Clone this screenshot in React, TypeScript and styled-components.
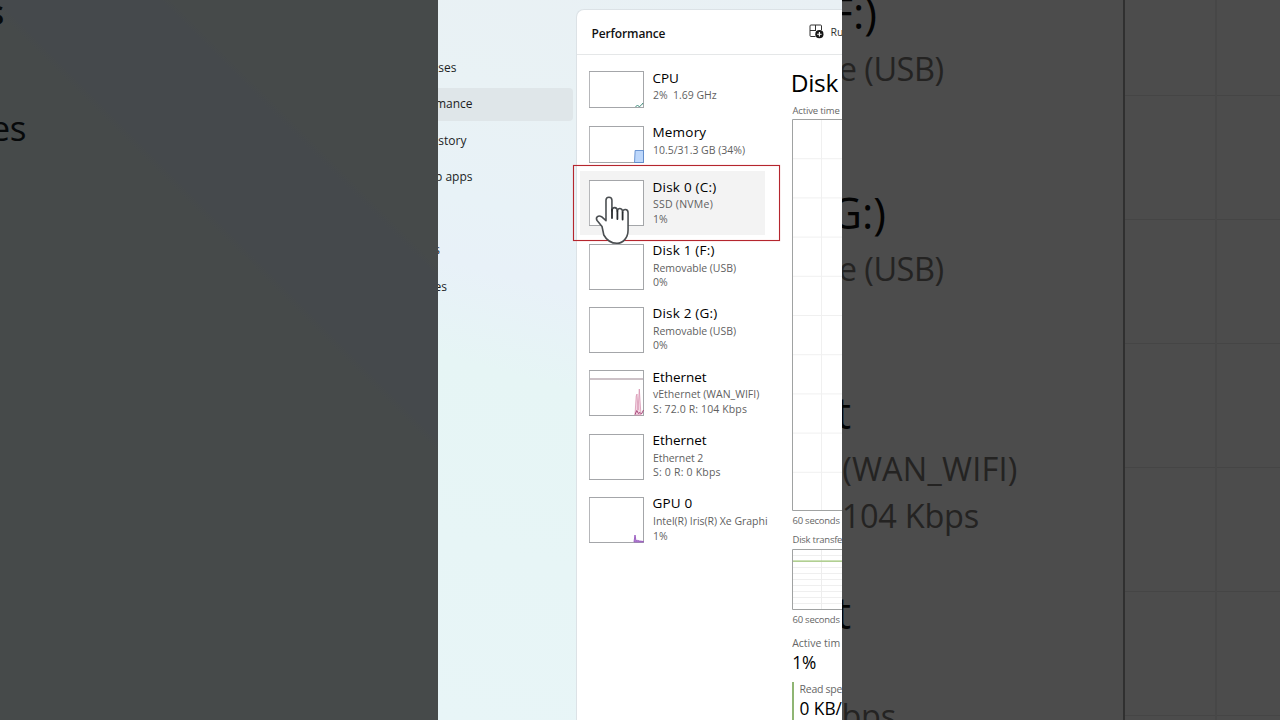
import { ReactNode } from "react";
import styled, { createGlobalStyle } from "styled-components";

const GlobalStyle = createGlobalStyle`
  * {
    box-sizing: border-box;
  }
  body {
    margin: 0;
    overflow: hidden;
    font-family: "Open Sans", "Noto Sans", sans-serif;
    color: #111;
  }
`;

const Screen = styled.div`
  display: grid;
  grid-template-columns: 438px 404px 438px;
  width: 1280px;
  height: 720px;
  overflow: hidden;
`;

/* Text whose beginning runs out of the visible area */
const Clipped = styled.div<{ $width: number }>`
  display: flex;
  justify-content: flex-end;
  width: ${(p) => p.$width}px;
  overflow: hidden;
  white-space: pre;
`;

const DimLeft = styled.div`
  display: flex;
  flex-direction: column;
  overflow: hidden;
  background: linear-gradient(
    45deg,
    #464a4a 0%,
    #464a4a 61%,
    #45494c 62%,
    #45494c 76%,
    #464a4a 77%
  );
  color: #07090a;
  font-size: 35px;
  line-height: 44px;
`;

const DimWord = styled(Clipped)<{ $gap: number; $bold?: boolean }>`
  flex: none;
  margin-top: ${(p) => p.$gap}px;
  font-weight: ${(p) => (p.$bold ? 600 : 400)};
  letter-spacing: -0.4px;
`;

const DimRight = styled.div`
  display: flex;
  justify-content: space-between;
  overflow: hidden;
  background: #4c4c4c;
`;

const DimList = styled.div`
  margin-top: -14px;
`;

const DimItem = styled.div`
  height: 200px;
`;

const DimTitle = styled(Clipped)`
  margin-bottom: 6px;
  color: #030303;
  font-size: 43px;
  line-height: 54px;
`;

const DimSub = styled(Clipped)<{ $track?: number }>`
  height: 46.5px;
  color: #242322;
  font-size: 32.5px;
  line-height: 46px;
  letter-spacing: ${(p) => p.$track ?? 0}px;
`;

const DimChart = styled.div`
  width: 157px;
  border-left: 2px solid #303030;
`;

const Stage = styled.div`
  display: flex;
  overflow: hidden;
  background: linear-gradient(
    195deg,
    #e9f0f4 0%,
    #e9f2f5 22%,
    #e8f2f7 36%,
    #e8f1f8 44%,
    #e6f5f5 56%,
    #e8f5f7 100%
  );
`;

const Nav = styled.nav`
  display: flex;
  flex-direction: column;
  flex: none;
  width: 138px;
  padding-top: 51px;
`;

const NavItem = styled.div<{ $active?: boolean }>`
  display: flex;
  align-items: center;
  flex: none;
  width: 135px;
  height: 33px;
  margin-bottom: 3.5px;
  border-radius: 0 4px 4px 0;
  background: ${(p) => (p.$active ? "#dfe6e9" : "transparent")};
  color: #1c1e1f;
  font-size: 12px;
  line-height: 18px;
`;

const Panel = styled.main`
  display: flex;
  flex-direction: column;
  flex: none;
  width: 266px;
  margin-top: 9px;
  border: solid #dce2e6;
  border-width: 1px 0 0 1px;
  border-radius: 8px 0 0 0;
  background: #fff;
`;

const Header = styled.header`
  display: flex;
  align-items: center;
  justify-content: space-between;
  flex: none;
  height: 45px;
  padding-left: 14.5px;
  border-bottom: 1px solid #e5e7e8;
`;

const Heading = styled.h1`
  margin: 3px 0 0;
  font-size: 12px;
  font-weight: 600;
  line-height: 18px;
  letter-spacing: -0.12px;
`;

const RunTask = styled.div`
  display: flex;
  align-items: center;
  gap: 6.5px;
  width: 33px;
  overflow: hidden;
  white-space: nowrap;
  color: #333;
  font-size: 10.5px;

  svg {
    flex: none;
    margin-bottom: 1px;
  }
`;

const Body = styled.div`
  display: flex;
  flex: 1;
  overflow: hidden;
`;

const List = styled.div`
  flex: none;
  width: 214.5px;
  padding: 7px 0 0 3px;
`;

const Item = styled.div<{ $short?: boolean; $selected?: boolean }>`
  display: flex;
  gap: 8px;
  width: 185px;
  height: ${(p) => (p.$short ? 54.6 : 63.35)}px;
  padding: 0 0 0 8.5px;
  background: ${(p) => (p.$selected ? "#f3f3f3" : "transparent")};
`;

const Thumb = styled.svg`
  display: block;
  flex: none;
  margin-top: 9px;
`;

const ItemText = styled.div`
  padding-top: 7.5px;
  white-space: pre;
`;

const ItemTitle = styled.div<{ $track?: number }>`
  margin-bottom: 1.5px;
  color: #000;
  font-size: 13.5px;
  line-height: 17px;
  letter-spacing: ${(p) => p.$track ?? 0}px;
`;

const ItemSub = styled.div<{ $track?: number }>`
  padding-left: 0.5px;
  color: #5f5f5f;
  font-size: 10.5px;
  line-height: 14.6px;
  letter-spacing: ${(p) => p.$track ?? 0}px;
`;

const Detail = styled.section`
  display: flex;
  flex-direction: column;
  flex: 1;
  padding-top: 12.8px;
  overflow: hidden;
  white-space: nowrap;

  svg {
    display: block;
    flex: none;
  }
`;

const DetailTitle = styled.h2`
  margin: 0 0 7px -0.7px;
  color: #000;
  font-size: 24.5px;
  font-weight: 400;
  line-height: 30px;
  letter-spacing: -0.35px;
`;

const Caption = styled.div<{ $top?: number; $bottom?: number; $track: number }>`
  flex: none;
  margin: ${(p) => p.$top ?? 0}px 0 ${(p) => p.$bottom ?? 0}px 1px;
  color: #666;
  font-size: 9.5px;
  line-height: 12px;
  letter-spacing: ${(p) => p.$track}px;
`;

const StatLabel = styled.div<{ $track?: number }>`
  color: #666;
  font-size: 10.5px;
  line-height: 14px;
  letter-spacing: ${(p) => p.$track ?? 0}px;
`;

const StatValue = styled.div`
  margin-top: 3px;
  color: #000;
  font-size: 17.3px;
  line-height: 20px;
`;

const Stat = styled.div`
  margin-top: 10px;
  padding-left: 0.7px;
`;

const SpeedStat = styled.div`
  flex: none;
  margin-top: 9.5px;
  height: 60px;
  padding-left: 6px;
  border-left: 2px solid #8fb573;
`;

const Highlight = styled.div`
  position: absolute;
  left: 573px;
  top: 165px;
  width: 207px;
  height: 76px;
  border: 1.5px solid #b5262e;
  box-shadow:
    0 0 1px rgba(220, 60, 70, 0.5),
    inset 0 0 1px rgba(220, 60, 70, 0.5);
`;

const Cursor = styled.svg`
  position: absolute;
  left: 594px;
  top: 195px;
`;

interface Resource {
  title: string;
  titleTrack?: number;
  lines: { text: string; track?: number }[];
  short?: boolean;
  selected?: boolean;
  graph?: ReactNode;
}

const resources: Resource[] = [
  {
    title: "CPU",
    lines: [{ text: "2%  1.69 GHz", track: -0.02 }],
    short: true,
    graph: (
      <path d="M46.5 35.5l2-1 2 1 2-1.5 1.5-2" stroke="#3f8c7c" fill="none" />
    ),
  },
  {
    title: "Memory",
    titleTrack: 0.2,
    lines: [{ text: "10.5/31.3 GB (34%)" }],
    short: true,
    graph: (
      <path
        d="M45.500 36.500l.6-12h8.400v12z"
        fill="#bdd7fb"
        stroke="#4f80c8"
        strokeWidth="0.8"
      />
    ),
  },
  {
    title: "Disk 0 (C:)",
    titleTrack: 0.23,
    lines: [{ text: "SSD (NVMe)", track: 0.25 }, { text: "1%" }],
    selected: true,
  },
  {
    title: "Disk 1 (F:)",
    titleTrack: 0.2,
    lines: [{ text: "Removable (USB)", track: -0.04 }, { text: "0%" }],
  },
  {
    title: "Disk 2 (G:)",
    titleTrack: 0.2,
    lines: [{ text: "Removable (USB)", track: -0.04 }, { text: "0%" }],
  },
  {
    title: "Ethernet",
    titleTrack: -0.03,
    lines: [
      { text: "vEthernet (WAN_WIFI)" },
      { text: "S: 72.0 R: 104 Kbps", track: 0.12 },
    ],
    graph: (
      <>
        <path d="M1 9h53" stroke="#9b8590" />
        <path
          d="M46 45l1.200-19 .8-2 1 16 1.300-21 1.200 19 .5 7z"
          fill="#f3d5e3"
          stroke="#d48bab"
          strokeWidth="0.7"
        />
        <path
          d="M46 44.5l1.8-4 1.6 3 1.6-1 1.5 1.5 2-4"
          fill="none"
          stroke="#a8487a"
        />
      </>
    ),
  },
  {
    title: "Ethernet",
    titleTrack: -0.03,
    lines: [
      { text: "Ethernet 2", track: -0.08 },
      { text: "S: 0 R: 0 Kbps", track: 0.2 },
    ],
  },
  {
    title: "GPU 0",
    titleTrack: 0.2,
    lines: [
      { text: "Intel(R) Iris(R) Xe Graphi", track: -0.03 },
      { text: "1%" },
    ],
    graph: (
      <path
        d="M45 45l1-7 1 5.800 1.500-.4 2 .6 4 .5v.5z"
        fill="#b98ad8"
        stroke="#9657bd"
        strokeWidth="0.9"
      />
    ),
  },
];

const navItems = ["ses", "mance", "story", "p apps", "", "s", "es"];
const navWidths = [18.5, 34.5, 28.5, 34.5, 0, 2, 9];

const dimItems = [
  { title: "F:)", width: 35, sub: "e (USB)", subWidth: 101.5, track: -0.5 },
  { title: "G:)", width: 44, sub: "e (USB)", subWidth: 101.5, track: -0.5 },
  {
    title: "t",
    width: 9,
    sub: "(WAN_WIFI)",
    subWidth: 175.5,
    track: 0.2,
    extra: "104 Kbps",
    extraWidth: 137,
  },
  { title: "t", width: 9, sub: "", subWidth: 0, extra: "bps", extraWidth: 54 },
];

const ResourceItem = ({
  title,
  titleTrack,
  lines,
  short,
  selected,
  graph,
}: Resource): JSX.Element => {
  const height = short ? 37 : 46;
  return (
    <Item $short={short} $selected={selected}>
      <Thumb width={56} height={height}>
        <rect
          x="0.3"
          y="0.5"
          width="54.2"
          height={height - 1}
          fill="#fff"
          stroke="#a4a6a9"
        />
        {graph}
      </Thumb>
      <ItemText>
        <ItemTitle $track={titleTrack}>{title}</ItemTitle>
        {lines.map((line) => (
          <ItemSub key={line.text} $track={line.track}>
            {line.text}
          </ItemSub>
        ))}
      </ItemText>
    </Item>
  );
};

const RunTaskIcon = () => (
  <svg width="15" height="15" viewBox="0 0 15 15" fill="none">
    <path
      d="M6.5 12.5H2a1 1 0 0 1-1-1V2a1 1 0 0 1 1-1h9.5a1 1 0 0 1 1 1v4M6.5 1v5.5M1 6.5h6"
      stroke="#333"
    />
    <circle cx="10.4" cy="10.2" r="4.1" fill="#161616" />
    <path d="M10.4 8v4.4M8.2 10.2h4.4" stroke="#fff" strokeWidth="1.1" />
  </svg>
);

const ActiveTimeChart = () => (
  <svg width="60" height="393">
    {[...Array(9)].map((_, i) => (
      <path key={i} d={`M1 ${39.7 + i * 39.2}h59`} stroke="#f0f0f0" />
    ))}
    <path d="M29.5 1v391" stroke="#f0f0f0" />
    <path d="M60 .5H.5v391H60" fill="none" stroke="#a0a2a2" />
  </svg>
);

const TransferChart = () => (
  <svg width="60" height="61">
    {[...Array(9)].map((_, i) => (
      <path key={i} d={`M1 ${6.5 + i * 6}h59`} stroke="#efefef" />
    ))}
    <path d="M29.5 1v59" stroke="#ededed" />
    <path d="M1 12.2h59" stroke="#9cc473" strokeWidth="1.3" />
    <path d="M60 .5H.5v60H60" fill="none" stroke="#a0a2a2" />
  </svg>
);

const HandCursor = () => (
  <Cursor width="40" height="50" viewBox="0 0 40 50">
    <path
      d="M11.5 24V5.200a3 3 0 0 1 6 0V16c0-4.500 5.500-4.500 5.500.3 0-4 5.300-3.800 5.300.9 0-3.600 5.500-3.600 5.500.6V35c0 8-5.200 13.300-11.200 13.300-6.500 0-10.600-3.500-13.300-8.300L7.500 31.500 2.500 25.500c-2-3.500 1.500-5.500 4.500-3.800l4.500 4z"
      transform="translate(.6 0) scale(.99 1)"
      fill="#fff"
      stroke="#4a4e51"
      strokeWidth="1.6"
      strokeLinejoin="round"
    />
    <path
      d="M18 14.500v8.500M23.400 16v8M28.600 17.500v7"
      stroke="#2a2d30"
      strokeWidth="1.8"
      strokeLinecap="round"
    />
  </Cursor>
);

export default function App() {
  return (
    <>
      <GlobalStyle />
      <Screen>
        <DimLeft>
          <DimWord $width={4} $gap={-10} $bold>
            s
          </DimWord>
          <DimWord $width={26} $gap={72}>
            es
          </DimWord>
        </DimLeft>

        <Stage>
          <Nav>
            {navItems.map((label, i) => (
              <NavItem key={i} $active={label === "mance"}>
                <Clipped $width={navWidths[i]}>{label}</Clipped>
              </NavItem>
            ))}
          </Nav>
          <Panel>
            <Header>
              <Heading>Performance</Heading>
              <RunTask>
                <RunTaskIcon />
                <span>Ru</span>
              </RunTask>
            </Header>
            <Body>
              <List>
                {resources.map((resource, i) => (
                  <ResourceItem key={i} {...resource} />
                ))}
              </List>
              <Detail>
                <DetailTitle>Disk</DetailTitle>
                <Caption $bottom={2.2} $track={-0.15}>
                  Active time
                </Caption>
                <ActiveTimeChart />
                <Caption $top={3.5} $track={-0.24}>
                  60 seconds
                </Caption>
                <Caption $top={6.8} $bottom={2.7} $track={-0.25}>
                  Disk transfe
                </Caption>
                <TransferChart />
                <Caption $top={3.8} $track={-0.24}>
                  60 seconds
                </Caption>
                <Stat>
                  <StatLabel>Active tim</StatLabel>
                  <StatValue>1%</StatValue>
                </Stat>
                <SpeedStat>
                  <StatLabel $track={-0.25}>Read spe</StatLabel>
                  <StatValue>0 KB/</StatValue>
                </SpeedStat>
              </Detail>
            </Body>
          </Panel>
        </Stage>

        <DimRight>
          <DimList>
            {dimItems.map((item, i) => (
              <DimItem key={i}>
                <DimTitle $width={item.width}>{item.title}</DimTitle>
                <DimSub $width={item.subWidth} $track={item.track}>
                  {item.sub}
                </DimSub>
                {item.extra && (
                  <DimSub $width={item.extraWidth} $track={-0.25}>
                    {item.extra}
                  </DimSub>
                )}
              </DimItem>
            ))}
          </DimList>
          <DimChart>
            <svg width="155" height="720">
              {[95.5, 219.5, 343.5, 467.5, 591.5, 715.5].map((y) => (
                <path key={y} d={`M0 ${y}h155`} stroke="#454545" />
              ))}
              <path d="M91 0v720" stroke="#474747" strokeWidth="2" />
            </svg>
          </DimChart>
        </DimRight>
      </Screen>
      <Highlight />
      <HandCursor />
    </>
  );
}
